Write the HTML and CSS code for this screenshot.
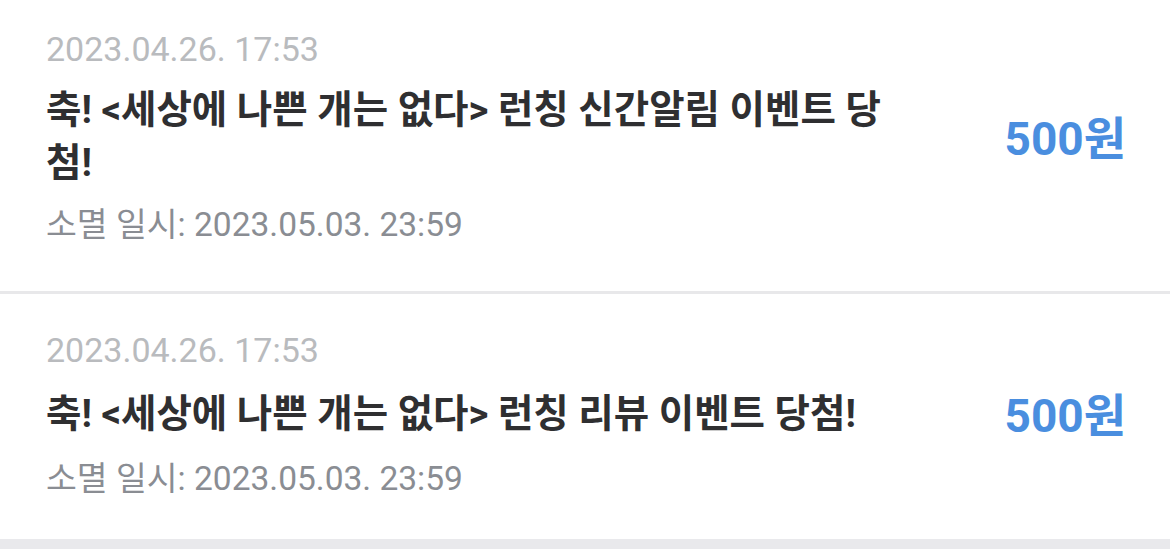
FILE: index.html
```html
<!DOCTYPE html>
<html lang="ko">
<head>
    <meta charset="utf-8">
    <title>포인트 내역</title>
    <link rel="stylesheet" href="styles.css">
</head>
<body>
    <ul class="point-list">
        <li class="point-item">
            <p class="point-date">2023.04.26. 17:53</p>
            <div class="point-row">
                <p class="point-title">축! &lt;세상에 나쁜 개는 없다&gt; 런칭 신간알림 이벤트 당첨!</p>
                <span class="point-amount">500원</span>
            </div>
            <p class="point-expire">소멸 일시: 2023.05.03. 23:59</p>
        </li>
        <li class="point-item">
            <p class="point-date">2023.04.26. 17:53</p>
            <div class="point-row">
                <p class="point-title">축! &lt;세상에 나쁜 개는 없다&gt; 런칭 리뷰 이벤트 당첨!</p>
                <span class="point-amount">500원</span>
            </div>
            <p class="point-expire">소멸 일시: 2023.05.03. 23:59</p>
        </li>
    </ul>
</body>
</html>
```

FILE: styles.css
```css
body {
    margin: 0;
    background-color: #FFFFFF;
    font-family: Roboto, "Noto Sans CJK KR", sans-serif;
}
.point-list {
    list-style: none;
    margin: 0;
    padding: 0;
}
.point-item {
    padding: 35px 44px 46px 46px;
    border-bottom: 3px solid #E8E8EA;
}
.point-item:first-child {
    padding-top: 28px;
}
/* last row sits on the grey section gap */
.point-item:last-child {
    padding-bottom: 40px;
    border-bottom: 16px solid #E9E9EC;
}
.point-item p {
    margin: 0;
}
.point-date {
    font-size: 34px;
    line-height: 42px;
    color: #B9BBBE;
}
.point-row {
    display: flex;
    align-items: center;
    justify-content: space-between;
    margin-top: 13px;
}
.point-title {
    max-width: 845px;
    font-size: 38.5px;
    line-height: 53px;
    font-weight: bold;
    color: #2F2F31;
}
.point-amount {
    padding-top: 6px;
    font-size: 46px;
    line-height: 53px;
    font-weight: bold;
    color: #4A8EDF; /* point blue */
}
.point-item .point-expire {
    margin-top: 16px;
    font-size: 33.5px;
    line-height: 40px;
    color: #8A8D93;
}
```
